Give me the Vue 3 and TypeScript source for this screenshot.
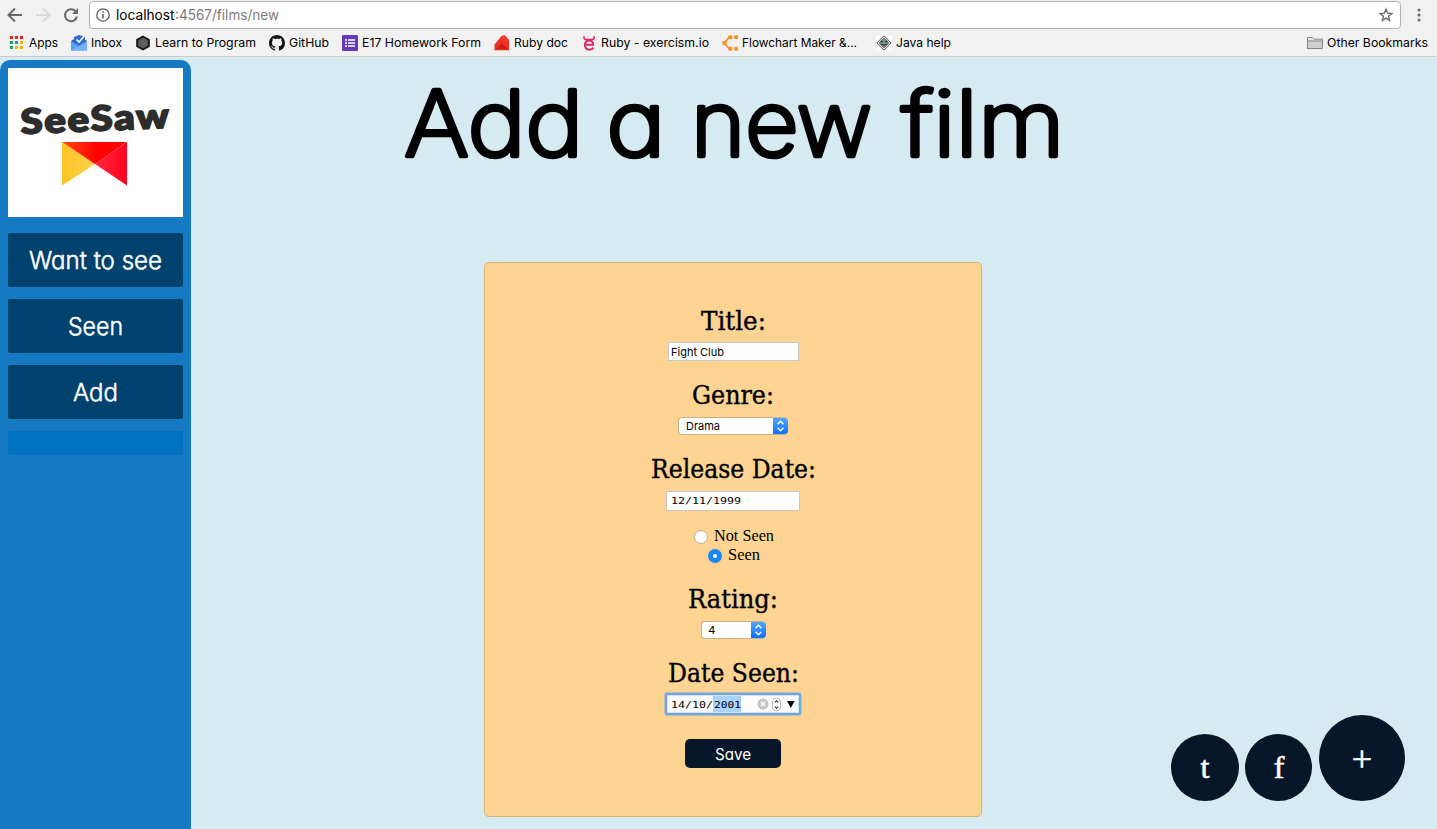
<script setup lang="ts">
import { defineComponent, h } from 'vue'

// Single line of text set to an exact measure.
const FitText = defineComponent({
  props: {
    text: { type: String, required: true },
    width: { type: Number, required: true },
    height: { type: Number, required: true },
    baseline: { type: Number, required: true },
  },
  setup(props) {
    return () =>
      h('svg', { width: props.width, height: props.height, overflow: 'visible', class: 'fit' }, [
        h('text', { x: 0, y: props.baseline, textLength: props.width, lengthAdjust: 'spacingAndGlyphs', fill: 'currentColor' }, props.text),
      ])
  },
})

interface Bookmark {
  icon: string
  label: string
  width: number
  wide?: boolean
}

const bookmarks: Bookmark[] = [
  { icon: 'apps', label: 'Apps', width: 29 },
  { icon: 'inbox', label: 'Inbox', width: 31 },
  { icon: 'hex', label: 'Learn to Program', width: 101 },
  { icon: 'github', label: 'GitHub', width: 40 },
  { icon: 'form', label: 'E17 Homework Form', width: 119 },
  { icon: 'ruby', label: 'Ruby doc', width: 54 },
  { icon: 'exercism', label: 'Ruby - exercism.io', width: 108 },
  { icon: 'flow', label: 'Flowchart Maker &...', width: 115, wide: true },
  { icon: 'java', label: 'Java help', width: 55 },
]

const appDots = ['#f31e1e', '#f31e1e', '#f31e1e', '#0fa765', '#1a85ff', '#ffb000', '#0fa765', '#ffb000', '#ffb000']

const menu = [
  { label: 'Want to see', width: 133 },
  { label: 'Seen', width: 55 },
  { label: 'Add', width: 45 },
]

const headingWords = [
  { text: 'Add', x: 404.5, width: 179 },
  { text: 'a', x: 606.5, width: 59 },
  { text: 'new', x: 691, width: 181 },
  { text: 'film', x: 901.5, width: 163 },
]
</script>

<template>
  <div class="window">
    <header class="chrome">
      <div class="toolbar">
        <svg class="nav" width="88" height="30" fill="none" stroke-width="2">
          <path d="M22 15H9M15 8.5L8.5 15L15 21.5" stroke="#6a6a6a" />
          <path d="M36 15H49M43 8.5L49.5 15L43 21.5" stroke="#d9d9d9" />
          <path d="M75.5 11.2A6 6 0 1 0 76.9 16.5" stroke="#6a6a6a" />
          <path d="M78 8V14H72Z" fill="#6a6a6a" stroke="none" />
        </svg>
        <div class="address">
          <svg class="info" width="14" height="14" fill="none" stroke="#5a5a5a">
            <circle cx="7" cy="7" r="6.2" stroke-width="1.3" />
            <path d="M7 6V10.5M7 3.3V4.8" stroke-width="1.5" />
          </svg>
          <FitText class="host" text="localhost" :width="58.5" :height="20" :baseline="15" />
          <FitText class="path" text=":4567/films/new" :width="104" :height="20" :baseline="15" />
          <svg class="star" width="16" height="16" fill="none" stroke="#6a6a6a" stroke-width="1.4">
            <path d="M8 2.2L9.6 6.2L13.9 6.5L10.6 9.3L11.6 13.5L8 11.2L4.4 13.5L5.4 9.3L2.1 6.5L6.4 6.2Z" />
          </svg>
        </div>
        <svg width="36" height="30" fill="#6a6a6a">
          <circle cx="18" cy="10" r="1.5" /><circle cx="18" cy="15" r="1.5" /><circle cx="18" cy="20" r="1.5" />
        </svg>
      </div>
      <nav class="bookmarks">
        <div v-for="b in bookmarks" :key="b.label" class="bookmark" :class="{ wide: b.wide }">
          <svg width="16" height="16" viewBox="0 0 16 16">
            <g v-if="b.icon === 'apps'">
              <rect v-for="(c, i) in appDots" :key="i" :x="1 + (i % 3) * 5" :y="1 + Math.floor(i / 3) * 5" width="3" height="3" :fill="c" />
            </g>
            <g v-else-if="b.icon === 'inbox'">
              <path d="M0 6L8 1L16 6V15H0Z" fill="#3154b8" />
              <path d="M3 2L8 0L14 2V10H3Z" fill="#3367d6" />
              <path d="M5.5 4.5L8 7L13 1.5" fill="none" stroke="#fff" stroke-width="1.6" />
              <path d="M0 6L8 11L16 6V15.5H0Z" fill="#5b9df5" />
              <path d="M0 15.5L8 10.8L16 6V15.5Z" fill="#73b0fa" />
            </g>
            <g v-else-if="b.icon === 'hex'">
              <path d="M8 .4L14.8 4.2V11.8L8 15.6L1.2 11.8V4.2Z" fill="#151515" />
              <path d="M8 2.6L12.8 5.3V10.7L8 13.4L3.2 10.7V5.3Z" fill="#5e5e5e" />
            </g>
            <path v-else-if="b.icon === 'github'" fill="#161616" d="M8 0C3.58 0 0 3.58 0 8c0 3.54 2.29 6.53 5.47 7.59.4.07.55-.17.55-.38 0-.19-.01-.82-.01-1.49-2.01.37-2.53-.49-2.69-.94-.09-.23-.48-.94-.82-1.13-.28-.15-.68-.52-.01-.53.63-.01 1.08.58 1.23.82.72 1.21 1.87.87 2.33.66.07-.52.28-.87.51-1.07-1.78-.2-3.64-.89-3.64-3.95 0-.87.31-1.59.82-2.15-.08-.2-.36-1.02.08-2.12 0 0 .67-.21 2.2.82.64-.18 1.32-.27 2-.27s1.36.09 2 .27c1.53-1.04 2.2-.82 2.2-.82.44 1.1.16 1.92.08 2.12.51.56.82 1.27.82 2.15 0 3.07-1.87 3.75-3.65 3.95.29.25.54.73.54 1.48 0 1.07-.01 1.93-.01 2.2 0 .21.15.46.55.38A8.01 8.01 0 0 0 16 8c0-4.42-3.58-8-8-8z" />
            <g v-else-if="b.icon === 'form'">
              <rect width="16" height="16" rx="1" fill="#673ab7" />
              <path d="M3 5H5M6 5H13M3 8H5M6 8H13M3 11H5M6 11H13" stroke="#fff" stroke-width="1.5" />
            </g>
            <g v-else-if="b.icon === 'ruby'">
              <path d="M8 .5H11L15 5V15H.5V9.5Z" fill="#f02d24" />
              <path d="M2 14L7.5 8.5L14 14Z" fill="#c91912" />
              <path d="M9 1L10.5 5H15" fill="none" stroke="#ff5a4e" stroke-width=".7" />
              <path d="M11.5 .5H14.5V4Z" fill="#fbe3df" />
              <path d="M.5 15.5H15.5" stroke="#d8c69a" />
            </g>
            <g v-else-if="b.icon === 'exercism'" fill="none" stroke="#e02964">
              <path d="M3 1.2V2.8Q3 4.5 5.2 4.5H11Q13.2 4.5 13.2 2.8V1.2" stroke-width="1.6" />
              <path d="M4.4 9.7H12.2Q12 5.5 8 5.5Q4 5.5 4 10Q4 14.7 8.5 14.7Q11.3 14.7 12.5 12.8" stroke-width="2" />
            </g>
            <g v-else-if="b.icon === 'flow'" fill="#f6922a">
              <path d="M8.3 2.2H7.2L2.5 8L7.2 13.8H8.3" fill="none" stroke="#f6922a" stroke-width="1.8" />
              <circle cx="2.4" cy="8" r="2.3" /><circle cx="8.3" cy="2.2" r="2.2" /><circle cx="14" cy="2.2" r="2.1" />
              <circle cx="8.3" cy="13.8" r="2.2" /><circle cx="14" cy="13.8" r="2.1" />
            </g>
            <g v-else>
              <rect width="16" height="16" fill="#fafafa" />
              <path d="M8 .8L15.2 8L8 15.2L.8 8Z" fill="#e3e5e3" stroke="#555" />
              <path d="M8 3L13 8L8 13L3 8Z" fill="#7b9689" stroke="#666" stroke-width=".8" />
              <path d="M4.5 6.5H7M9 6.5H11.5M5 9.2Q8 11 11 9.2" fill="none" stroke="#264a3a" stroke-width="1.4" />
            </g>
          </svg>
          <FitText class="small" :text="b.label" :width="b.width" :height="16" :baseline="12" />
        </div>
        <div class="bookmark other">
          <svg width="16" height="16" viewBox="0 0 16 16" fill="#cfcfcf" stroke="#858585">
            <path d="M.5 13.5V2.5H5.5L7 4.2H15.5V13.5Z" fill="#e6e6e6" />
            <path d="M.5 6H15.5V13.5H.5Z" />
          </svg>
          <FitText class="small" text="Other Bookmarks" :width="101" :height="16" :baseline="12" />
        </div>
      </nav>
    </header>

    <div class="page">
      <aside class="sidebar">
        <svg class="logo" width="175" height="149">
          <defs>
            <linearGradient id="top"><stop offset="0" stop-color="#ff4d12" /><stop offset=".55" stop-color="#ff0000" /><stop offset="1" stop-color="#fa0a08" /></linearGradient>
            <linearGradient id="right"><stop offset="0" stop-color="#ff2b3c" /><stop offset="1" stop-color="#ff001f" /></linearGradient>
            <linearGradient id="left"><stop offset="0" stop-color="#ffc425" /><stop offset="1" stop-color="#ffd04a" /></linearGradient>
          </defs>
          <text class="wordmark" x="13" y="66" textLength="150" lengthAdjust="spacingAndGlyphs" transform="rotate(-2.4 12 66)">SeeSaw</text>
          <path d="M54 74V117.5L87 96Z" fill="url(#left)" />
          <path d="M119 74V117.5L87 96Z" fill="url(#right)" />
          <path d="M54 74H119L87 96Z" fill="url(#top)" />
        </svg>
        <div class="menu">
          <a v-for="m in menu" :key="m.label" class="item">
            <FitText :text="m.label" :width="m.width" :height="30" :baseline="24" />
          </a>
          <div class="item blank"></div>
        </div>
      </aside>

      <main class="content">
        <svg class="heading" width="1246" height="150" viewBox="191 57 1246 150">
          <text v-for="w in headingWords" :key="w.text" :x="w.x" y="156" :textLength="w.width" lengthAdjust="spacingAndGlyphs">{{ w.text }}</text>
        </svg>

        <form class="card">
          <FitText class="label" text="Title:" :width="65" :height="32" :baseline="24" />
          <div class="field title"><FitText class="tiny" text="Fight Club" :width="53" :height="15" :baseline="12" /></div>

          <FitText class="label" text="Genre:" :width="82" :height="32" :baseline="24" />
          <div class="select genre">
            <FitText class="tiny" text="Drama" :width="34" :height="16" :baseline="12" />
            <span class="stepper"><svg width="15" height="18" fill="none" stroke="#fff" stroke-width="1.4"><path d="M4.5 7.3L7.5 4.3L10.5 7.3M4.5 10.7L7.5 13.7L10.5 10.7" /></svg></span>
          </div>

          <FitText class="label" text="Release Date:" :width="165" :height="32" :baseline="24" />
          <div class="field date">
            <FitText class="mono" text="12/11/1999" :width="70" :height="16" :baseline="11" />
          </div>

          <div class="radios">
            <div class="radio"><i class="dot"></i><FitText text="Not Seen" :width="60" :height="19" :baseline="15" /></div>
            <div class="radio"><i class="dot on"></i><FitText text="Seen" :width="32" :height="19" :baseline="15" /></div>
          </div>

          <FitText class="label" text="Rating:" :width="90" :height="32" :baseline="24" />
          <div class="select rating">
            <FitText class="tiny" text="4" :width="7.5" :height="16" :baseline="12" />
            <span class="stepper"><svg width="15" height="18" fill="none" stroke="#fff" stroke-width="1.4"><path d="M4.5 7.3L7.5 4.3L10.5 7.3M4.5 10.7L7.5 13.7L10.5 10.7" /></svg></span>
          </div>

          <FitText class="label" text="Date Seen:" :width="131" :height="32" :baseline="24" />
          <div class="field date focused">
            <FitText class="mono" text="14/10/" :width="42" :height="16" :baseline="12" />
            <span class="selected"><FitText class="mono" text="2001" :width="27" :height="16" :baseline="12" /></span>
            <svg class="controls" width="42" height="16">
              <circle cx="6" cy="8" r="5.5" fill="#c3c3c3" />
              <path d="M3.8 5.8L8.2 10.2M8.2 5.8L3.8 10.2" stroke="#fff" stroke-width="1.4" />
              <rect x="15.5" y="2" width="8" height="13" rx="4" fill="#fff" stroke="#bbb" />
              <path d="M17.8 6.5L19.5 4.5L21.2 6.5M17.8 10.5L19.5 12.5L21.2 10.5" fill="none" stroke="#333" stroke-width="1.1" />
              <path d="M30 5H37.6L33.8 12Z" fill="#000" />
            </svg>
          </div>

          <button class="save" type="button"><FitText text="Save" :width="36" :height="20" :baseline="16" /></button>
        </form>

        <div class="bubbles">
          <span class="bubble t"><svg width="68" height="67"><text x="34" y="44" text-anchor="middle">t</text></svg></span>
          <span class="bubble f"><svg width="67" height="67"><text x="34" y="44" text-anchor="middle">f</text></svg></span>
          <span class="bubble plus"><svg width="86" height="86"><text x="43" y="56" text-anchor="middle">+</text></svg></span>
        </div>
      </main>
    </div>
  </div>
</template>

<style>
body {
  margin: 0;
  overflow: hidden;
}
</style>

<style scoped>
.window {
  width: 1437px;
  height: 829px;
  overflow: hidden;
  display: flex;
  flex-direction: column;
  background: #d5ebf1;
  font-family: Inter, "Liberation Sans", sans-serif;
  color: #000;
}
svg {
  display: block;
  flex: none;
}
.chrome {
  box-sizing: border-box;
  height: 57px;
  background: #f1f1f1;
  border-bottom: 1px solid #cccccf;
}
.toolbar {
  display: flex;
  height: 30px;
}
.nav {
  margin-right: 1px;
}
.address {
  box-sizing: border-box;
  width: 1312px;
  height: 28px;
  margin-top: 1px;
  padding: 0 6px;
  display: flex;
  align-items: center;
  background: #fff;
  border: 1px solid #b3b3b3;
  border-radius: 4px;
  font-size: 14px;
}
.info {
  margin-right: 6px;
}
.path {
  color: #7c7c7c;
}
.star {
  margin-left: auto;
}
.bookmarks {
  display: flex;
  gap: 13px;
  padding: 5px 9px 0;
}
.bookmark {
  display: flex;
  gap: 4px;
}
.bookmark.wide {
  padding-right: 6px;
}
.bookmark.other {
  margin-left: auto;
}
.small {
  font-size: 12px;
}
.page {
  flex: 1;
  display: flex;
  min-height: 0;
}
.sidebar {
  box-sizing: border-box;
  width: 191px;
  margin-top: 3px;
  padding: 8px;
  background: #167ac3;
  border-radius: 10px 10px 0 0;
}
.logo {
  background: #fff;
}
.wordmark {
  font: 900 34.5px Lato, sans-serif;
  letter-spacing: 1.5px;
  fill: #2d2d2d;
  stroke: #2d2d2d;
  stroke-width: 1.8px;
}
.menu {
  display: flex;
  flex-direction: column;
  gap: 12px;
  margin-top: 16px;
}
.item {
  height: 54px;
  display: flex;
  align-items: center;
  justify-content: center;
  background: #00426e;
  border-radius: 2px;
  color: #fff;
  font-size: 24px;
  font-weight: 300;
  stroke: #fff;
  stroke-width: 0.5px;
  stroke-linejoin: round;
  font-feature-settings: "cv11";
}
.item.blank {
  height: 24px;
  background: #0072c0;
}
.content {
  flex: 1;
  position: relative;
}
.heading {
  font-size: 90.5px;
  font-weight: 200;
  font-feature-settings: "cv11";
  stroke: #000;
  stroke-width: 4.6px;
  stroke-linejoin: round;
}
.card {
  box-sizing: border-box;
  width: 498px;
  height: 555px;
  margin: 55px 0 0 293px;
  padding-top: 43px;
  display: flex;
  flex-direction: column;
  align-items: center;
  background: #ffd391;
  border: 1px solid #d9b27a;
  border-radius: 5px;
  font-family: "Liberation Serif", serif;
  font-size: 16px;
}
.label {
  font-family: "DejaVu Serif Condensed", "DejaVu Serif", serif;
  font-stretch: condensed;
  font-size: 25.5px;
  stroke: #000;
  stroke-width: 0.35px;
}
.tiny {
  font-family: Inter, sans-serif;
  font-size: 11px;
}
.mono {
  font-family: "DejaVu Sans Mono", monospace;
  font-size: 9.5px;
}
.field {
  box-sizing: border-box;
  display: flex;
  align-items: center;
  background: #fff;
  border: 1px solid #c8c8cc;
}
.field.title {
  width: 131px;
  height: 19px;
  margin: 4px 0 19px;
  padding-left: 2px;
}
.field.date {
  width: 134px;
  height: 20px;
  margin: 5px 0 15px;
  padding-left: 3.5px;
}
.field.focused {
  height: 20px;
  margin: 4px 0 25px;
  border-color: #6ba6e2;
  border-radius: 1px;
  box-shadow: 0 0 0 1.5px #70a9e1, inset 0 0 1px 1px #cfe2f5;
}
.selected {
  height: 16px;
  padding: 0 0 0 1px;
  background: #a9d2fd;
}
.controls {
  margin-left: 16px;
}
.select {
  box-sizing: border-box;
  height: 18px;
  margin: 5px 0 19px;
  padding-left: 7px;
  display: flex;
  align-items: center;
  justify-content: space-between;
  overflow: hidden;
  background: #fff;
  border: 1px solid #c7b18e;
  border-right: 0;
  border-radius: 4px;
}
.genre {
  width: 110px;
}
.rating {
  width: 65px;
  padding-left: 6px;
}
.stepper {
  display: flex;
  align-items: center;
  background: linear-gradient(#56a9fb, #076bff);
}
.radios {
  margin-bottom: 20px;
  padding-left: 2px;
}
.radio {
  display: flex;
  align-items: center;
  justify-content: center;
  gap: 6px;
}
.dot {
  box-sizing: border-box;
  width: 14px;
  height: 14px;
  margin-top: 3px;
  background: #fff;
  border: 1px solid #bdb3a5;
  border-radius: 50%;
}
.dot.on {
  background: #fff;
  border: 5px solid #1b87ff;
}
.save {
  width: 96px;
  height: 29px;
  padding: 0;
  display: flex;
  align-items: center;
  justify-content: center;
  background: #071729;
  border: 0;
  border-radius: 5px;
  color: #fff;
  font-family: Inter, sans-serif;
  font-size: 16px;
  font-feature-settings: "cv11";
}
.bubbles {
  position: absolute;
  right: 32px;
  bottom: 28px;
  display: flex;
  align-items: flex-end;
  gap: 6px;
}
.bubble {
  background: #071729;
  border-radius: 50%;
  font-family: "Liberation Serif", serif;
  font-size: 32px;
  fill: #fff;
  stroke: #fff;
  stroke-width: 0.6px;
}
.bubble.plus {
  margin-left: 1px;
  font-size: 36px;
}
</style>
